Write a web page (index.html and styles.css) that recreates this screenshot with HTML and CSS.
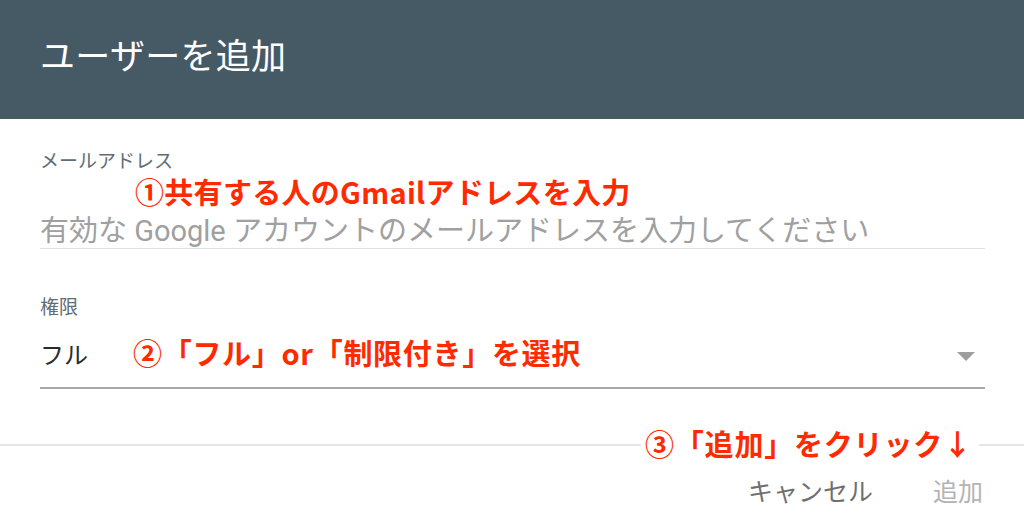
FILE: index.html
```html
<!DOCTYPE html>
<html lang="ja">
<head>
<meta charset="UTF-8" />
<meta name="viewport" content="width=device-width, initial-scale=1" />
<title>ユーザーを追加</title>
<link rel="stylesheet" href="styles.css">
</head>
<body>

<header class="dialog-header">
  <h1>ユーザーを追加</h1>
</header>

<main class="dialog-body">
  <div class="field field-email">
    <label class="field-label" for="email">メールアドレス</label>
    <input class="field-input" type="email" id="email" placeholder="有効な Google アカウントのメールアドレスを入力してください" />
    <span class="note note-1">①共有する人のGmailアドレスを入力</span>
  </div>

  <div class="field field-perm">
    <span class="field-label">権限</span>
    <div class="select-row">
      <span class="select-value">フル</span>
      <span class="select-arrow"></span>
    </div>
    <span class="note note-2">②「フル」or「制限付き」を選択</span>
  </div>
</main>

<footer class="dialog-footer">
  <div class="footer-divider">
    <span class="note note-3">③「追加」をクリック↓</span>
  </div>
  <div class="actions">
    <button class="btn btn-cancel">キャンセル</button>
    <button class="btn btn-add">追加</button>
  </div>
</footer>

</body>
</html>
```

FILE: styles.css
```css
body {
  margin: 0; background: #fff; color: #333;
  font-family: Roboto, "Noto Sans CJK JP", sans-serif;
  width: 1024px; height: 519px; overflow: hidden;
}
.dialog-header {
  background: #465a65;
  height: 119px;
  padding: 0 40px 4px;
  box-sizing: border-box;
  display: flex; align-items: center;
}
.dialog-header h1 {
  margin: 0; color: #fff;
  font-weight: 400; font-size: 35px; line-height: 40px;
  letter-spacing: 0.3px;
}
.dialog-body {
  padding: 0 39px 0 40px;
}
.field {
  position: relative;
}
.field-email {
  padding-top: 32px;
}
.field-label {
  display: block;
  font-size: 19px; line-height: 22px;
  color: #5f6d76;
}
.field-input {
  display: block;
  width: 100%;
  box-sizing: border-box;
  margin-top: 40px;
  padding: 0;
  border: none;
  border-bottom: 1px solid #e0e0e0;
  height: 36px;
  font-family: Roboto, "Noto Sans CJK JP", sans-serif;
  font-size: 29px; line-height: 34px;
  outline: none;
}
.field-input::placeholder {
  color: #a0a0a0;
}
.field-perm {
  margin-top: 48px;
}
.select-row {
  margin-top: 20px;
  display: flex; align-items: center; justify-content: space-between;
  height: 34px;
  padding-bottom: 14px;
  border-bottom: 2px solid #a8a8a8;
}
.select-value {
  font-size: 24px; line-height: 34px; color: #2b2b2b;
}
.select-arrow {
  width: 0; height: 0;
  margin-right: 10px;
  border-left: 9px solid transparent;
  border-right: 9px solid transparent;
  border-top: 9px solid #9e9e9e;
}
.note {
  position: absolute;
  color: #ff2a00;
  font-family: "Noto Sans CJK JP", sans-serif;
  font-weight: 700;
  font-size: 29px; line-height: 34px;
  white-space: nowrap;
}
.note-1 { left: 95px; top: 55px; letter-spacing: 0.3px; }
.note-2 { left: 93px; top: 38px; letter-spacing: 0.7px; }
.dialog-footer {
  margin-top: 55px;
}
.footer-divider {
  position: relative;
  height: 2px;
  background: #e6e6e6;
}
.note-3 {
  left: 641px; top: -18px;
  padding: 0 6px 0 4px;
  background: #fff;
  letter-spacing: 0.8px;
}
.actions {
  display: flex; justify-content: flex-end;
  gap: 60px;
  padding: 28px 41px 0 0;
}
.btn {
  background: none; border: none; padding: 0;
  font-family: "Noto Sans CJK JP", sans-serif;
  font-size: 25px; line-height: 32px;
  cursor: pointer;
}
.btn-cancel { color: #6f6f6f; }
.btn-add { color: #b4b4b4; }
```
